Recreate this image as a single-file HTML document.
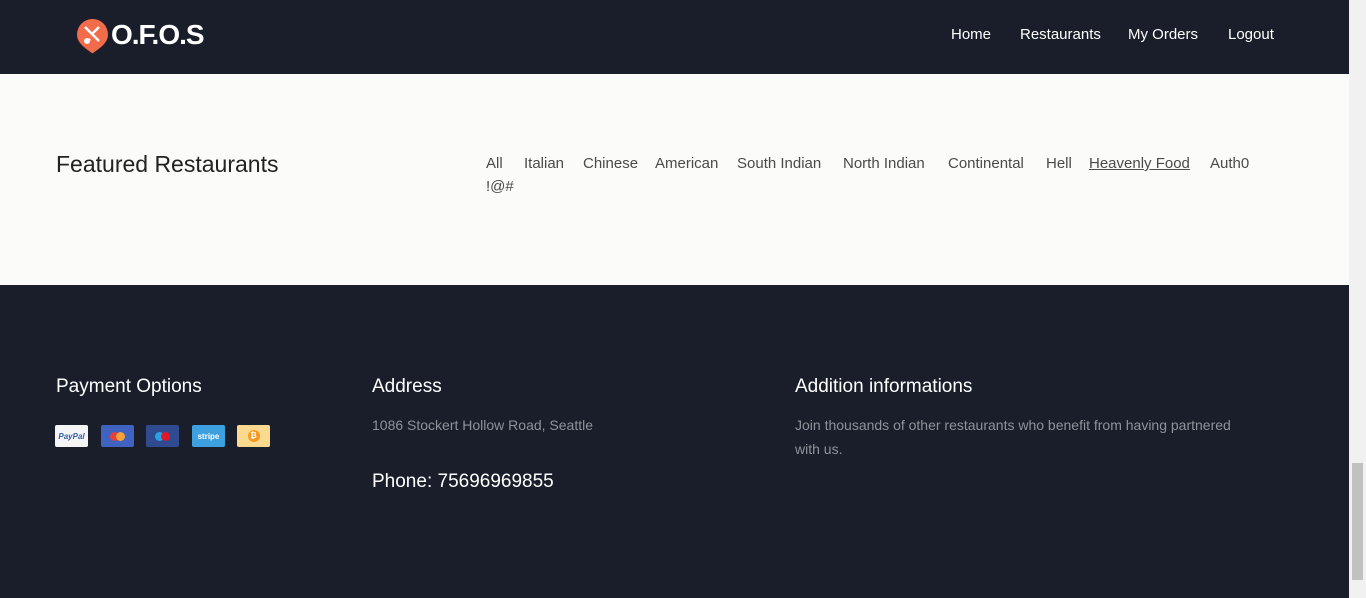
<!DOCTYPE html>
<html><head><meta charset="utf-8"><style>
*{margin:0;padding:0;box-sizing:border-box}
body{width:1366px;height:598px;overflow:hidden;font-family:"Liberation Sans",sans-serif;background:#fbfbfa;position:relative}
.hdr{position:absolute;left:0;top:0;width:1349px;height:74px;background:#1a1e2a}
.nav{position:absolute;top:26px;color:#fff;font-size:15px}
.mid{position:absolute;left:0;top:74px;width:1349px;height:211px;background:#fbfbfa}
.ft{position:absolute;left:0;top:285px;width:1349px;height:313px;background:#1a1e2a}
.sb{position:absolute;left:1349px;top:0;width:17px;height:598px;background:#f1f1f1}
.thumb{position:absolute;left:1352px;top:463px;width:11px;height:117px;background:#c1c1c1}
.cat{position:absolute;top:155px;font-size:15px;color:#4a4a4a}
.h{position:absolute;color:#fff;font-size:19px}
.g{position:absolute;color:#8d929b;font-size:14px;line-height:24px}
.pi{position:absolute;top:425px;width:33px;height:22px;border-radius:2px;font-size:8px;display:flex;align-items:center;justify-content:center;font-weight:bold}
</style></head><body>
<div class="hdr">
<svg style="position:absolute;left:76px;top:18px" width="33" height="36" viewBox="0 0 33 36"><path d="M16.5 1A15.5 15.5 0 0 1 32 16.5c0 9-9 14-15.5 19C10 30.5 1 25.5 1 16.5A15.5 15.5 0 0 1 16.5 1z" fill="#f26b4a"/><path d="M9 9l14 14M23 9l-7 7M14 21l-4 4" stroke="#fff" stroke-width="2.5"/><circle cx="11" cy="23" r="3" fill="#fff"/></svg>
<div style="position:absolute;left:111px;top:19px;color:#fff;font-size:28px;font-weight:bold;letter-spacing:-1px">O.F.O.S</div>
<div class="nav" style="left:951px">Home</div>
<div class="nav" style="left:1020px">Restaurants</div>
<div class="nav" style="left:1128px">My Orders</div>
<div class="nav" style="left:1228px">Logout</div>
</div>
<div class="mid"></div>
<div style="position:absolute;left:56px;top:151px;font-size:23px;color:#222">Featured Restaurants</div>
<div class="cat" style="left:486px">All</div>
<div class="cat" style="left:524px">Italian</div>
<div class="cat" style="left:583px">Chinese</div>
<div class="cat" style="left:655px">American</div>
<div class="cat" style="left:737px">South Indian</div>
<div class="cat" style="left:843px">North Indian</div>
<div class="cat" style="left:948px">Continental</div>
<div class="cat" style="left:1046px">Hell</div>
<div class="cat" style="left:1089px;text-decoration:underline">Heavenly Food</div>
<div class="cat" style="left:1210px">Auth0</div>
<div class="cat" style="left:486px;top:178px">!@#</div>
<div class="ft"></div>
<div class="h" style="left:56px;top:376px">Payment Options</div>
<div class="h" style="left:372px;top:376px">Address</div>
<div class="h" style="left:795px;top:376px">Addition informations</div>
<div class="pi" style="left:55px;background:#f5f5f5;color:#2a5ea8;font-style:italic">PayPal</div>
<div class="pi" style="left:101px;background:#4062c0"><span style="width:9px;height:9px;border-radius:50%;background:#e5403a"></span><span style="width:9px;height:9px;border-radius:50%;background:#f5a23a;margin-left:-3px"></span></div>
<div class="pi" style="left:146px;background:#2f4a8f"><span style="width:9px;height:9px;border-radius:50%;background:#2aa1e0"></span><span style="width:9px;height:9px;border-radius:50%;background:#e0162b;margin-left:-3px"></span></div>
<div class="pi" style="left:192px;background:#3ea1df;color:#fff">stripe</div>
<div class="pi" style="left:237px;background:#fbd98f"><span style="width:12px;height:12px;border-radius:50%;background:#f39a20;color:#fff;font-size:8px;text-align:center;line-height:12px">₿</span></div>
<div class="g" style="left:372px;top:413px">1086 Stockert Hollow Road, Seattle</div>
<div style="position:absolute;left:372px;top:471px;color:#fff;font-size:19px">Phone: 75696969855</div>
<div class="g" style="left:795px;top:413px;width:455px">Join thousands of other restaurants who benefit from having partnered with us.</div>
<div class="sb"></div><div class="thumb"></div>
</body></html>
